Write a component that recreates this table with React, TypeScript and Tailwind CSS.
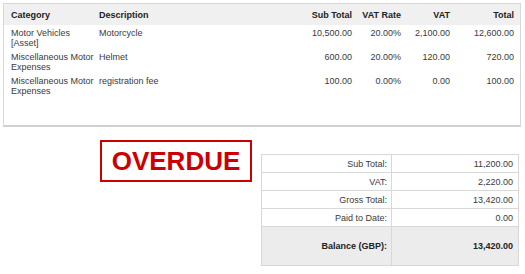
import React from "react";

type Line = {
  category: string;
  description: string;
  subTotal: string;
  vatRate: string;
  vat: string;
  total: string;
};

const lines: Line[] = [
  { category: "Motor Vehicles [Asset]", description: "Motorcycle", subTotal: "10,500.00", vatRate: "20.00%", vat: "2,100.00", total: "12,600.00" },
  { category: "Miscellaneous Motor Expenses", description: "Helmet", subTotal: "600.00", vatRate: "20.00%", vat: "120.00", total: "720.00" },
  { category: "Miscellaneous Motor Expenses", description: "registration fee", subTotal: "100.00", vatRate: "0.00%", vat: "0.00", total: "100.00" },
];

const summary = [
  { label: "Sub Total:", value: "11,200.00" },
  { label: "VAT:", value: "2,220.00" },
  { label: "Gross Total:", value: "13,420.00" },
  { label: "Paid to Date:", value: "0.00" },
];

export default function App() {
  return (
    <div
      className="w-[525px] h-[274px] bg-white text-[#3a3a3a] text-[9px] leading-[10px] overflow-hidden"
      style={{ fontFamily: '"Liberation Sans", Arial, sans-serif' }}
    >
      {/* line items */}
      <div className="ml-[3px] mt-[3px] w-[518px] h-[124px] border border-[#d8d8d8] border-b-2 border-b-[#d0d0d0]">
        <div className="flex h-[21px] items-center bg-[#f0f0f0] font-bold text-[#222]">
          <div className="w-[92px] pl-[7px]">Category</div>
          <div className="flex-1 pl-[3px]">Description</div>
          <div className="w-[60px] pr-[4px] text-right">Sub Total</div>
          <div className="w-[49px] pr-[4px] text-right">VAT Rate</div>
          <div className="w-[49px] pr-[4px] text-right">VAT</div>
          <div className="w-[66px] pr-[6px] text-right">Total</div>
        </div>
        {lines.map((l, i) => (
          <div key={i} className="flex h-[24px] pt-[3px]">
            <div className="w-[92px] pl-[7px]">{l.category}</div>
            <div className="flex-1 pl-[3px]">{l.description}</div>
            <div className="w-[60px] pr-[4px] text-right">{l.subTotal}</div>
            <div className="w-[49px] pr-[4px] text-right">{l.vatRate}</div>
            <div className="w-[49px] pr-[4px] text-right">{l.vat}</div>
            <div className="w-[66px] pr-[6px] text-right">{l.total}</div>
          </div>
        ))}
      </div>

      <div className="flex items-start mt-[13px]">
        {/* status stamp */}
        <div className="ml-[100px] w-[152px] h-[42px] border-2 border-[#cc0000] flex items-center justify-center">
          <span className="text-[26px] leading-none font-bold text-[#cc0000]">OVERDUE</span>
        </div>

        {/* totals */}
        <div className="ml-[9px] mt-[14px] w-[258px] border border-[#d8d8d8]">
          {summary.map((s) => (
            <div key={s.label} className="flex h-[18px] border-b border-[#d8d8d8]">
              <div className="w-[130px] border-r border-[#d8d8d8] pr-[4px] flex items-center justify-end">{s.label}</div>
              <div className="flex-1 pr-[5px] flex items-center justify-end">{s.value}</div>
            </div>
          ))}
          <div className="flex h-[38px] bg-[#ececec] font-bold text-[#222]">
            <div className="w-[130px] border-r border-[#d8d8d8] pr-[4px] flex items-center justify-end">Balance (GBP):</div>
            <div className="flex-1 pr-[5px] flex items-center justify-end">13,420.00</div>
          </div>
        </div>
      </div>
    </div>
  );
}
